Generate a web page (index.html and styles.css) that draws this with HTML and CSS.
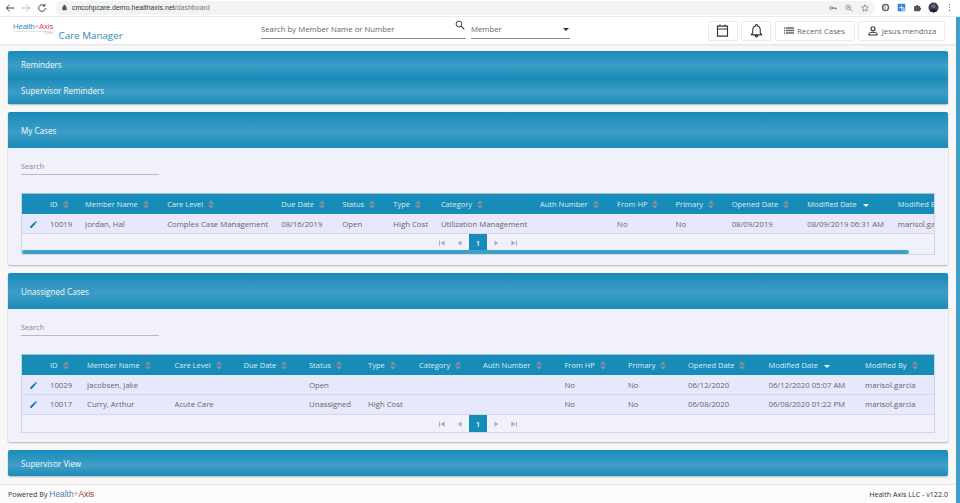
FILE: index.html
```html
<!DOCTYPE html>
<html lang="en">
<head>
<meta charset="utf-8">
<title>Care Manager</title>
<link rel="stylesheet" href="styles.css">
</head>
<body>
<svg class="defs" width="0" height="0" aria-hidden="true">
  <symbol id="sort" viewBox="0 0 7 10"><path d="M3.500 0 7 4H0zM0 6h7l-3.500 4z"/></symbol>
  <symbol id="edit" viewBox="0 0 24 24"><path d="M3 17.200V21h3.800L17.800 9.900l-3.700-3.700zM20.700 7a1 1 0 0 0 0-1.400l-2.300-2.300a1 1 0 0 0-1.400 0l-1.800 1.800 3.700 3.700z"/></symbol>
  <symbol id="first" viewBox="0 0 8 8"><path d="M0 .5h1.300v7H0zM7.500.5v7L2 4z"/></symbol>
  <symbol id="prev" viewBox="0 0 8 8"><path d="M6 .5v7L1 4z"/></symbol>
  <symbol id="next" viewBox="0 0 8 8"><path d="M2 .5v7L7 4z"/></symbol>
  <symbol id="last" viewBox="0 0 8 8"><path d="M6.700.5H8v7H6.700zM.5.5v7L6 4z"/></symbol>
</svg>

<div class="chrome">
  <svg class="c-ico" viewBox="0 0 12 12"><path d="M11 6H2M5.500 2 1.500 6l4 4" fill="none" stroke="#444" stroke-width="1.200"/></svg>
  <svg class="c-ico" viewBox="0 0 12 12"><path d="M1 6h9M6.500 2l4 4-4 4" fill="none" stroke="#b5b5b5" stroke-width="1.200"/></svg>
  <svg class="c-ico" viewBox="0 0 12 12"><path d="M10 6a4 4 0 1 1-1.200-2.800M9.500 1v2.700H6.800" fill="none" stroke="#444" stroke-width="1.200"/></svg>
  <div class="omnibox">
    <svg class="lock" viewBox="0 0 8 10"><path d="M1 4h6v5H1zM2.300 4V2.700a1.700 1.700 0 0 1 3.400 0V4" fill="#555" stroke="#555" stroke-width=".7"/></svg>
    <span class="url"><span class="url-host">cmcohpcare.demo.healthaxis.net</span>/dashboard</span>
    <span class="omni-right">
      <svg class="o-ico" viewBox="0 0 12 12"><circle cx="3.500" cy="6" r="2" fill="none" stroke="#666" stroke-width="1.300"/><path d="M5.500 6H11v2M9 6v1.500" fill="none" stroke="#666" stroke-width="1.300"/></svg>
      <svg class="o-ico" viewBox="0 0 12 12"><circle cx="5" cy="5" r="3.500" fill="none" stroke="#777"/><path d="m7.500 7.500 3.500 3.500M3.500 5h3M5 3.500v3" fill="none" stroke="#777"/></svg>
      <svg class="o-ico" viewBox="0 0 12 12"><path d="m6 1 1.500 3.300 3.500.4-2.600 2.400.7 3.500L6 8.900l-3.100 1.700.7-3.500L1 4.700l3.500-.4z" fill="none" stroke="#666"/></svg>
    </span>
  </div>
  <div class="exts">
    <svg class="e-ico" viewBox="0 0 12 12"><circle cx="6" cy="6" r="4" fill="#fff" stroke="#666" stroke-width="2"/><circle cx="5" cy="6" r="2" fill="#bbb"/></svg>
    <svg class="e-ico" viewBox="0 0 12 12"><rect x="1" y="1" width="10" height="10" fill="#2d88dc"/><path d="M3 6h6M6 3v6" stroke="#fff"/><rect x="7" y="7" width="4" height="4" fill="#9cc7ee"/></svg>
    <svg class="e-ico" viewBox="0 0 12 12"><path d="M1.500 4H4a1.500 1.500 0 1 1 3 0h2.500v2.200a1.500 1.500 0 1 1 0 3V11h-8z" fill="#555"/></svg>
    <svg class="e-ico avatar" viewBox="0 0 12 12"><circle cx="6" cy="6" r="5.500" fill="#34425e"/><circle cx="6" cy="4.500" r="2.200" fill="#8a5c4b"/><path d="M2 10c1-3 7-3 8 0l-4 1.500z" fill="#1e2333"/></svg>
    <svg class="e-ico" viewBox="0 0 12 12"><path d="M6 2.200v.1M6 6v.1M6 9.800v.1" stroke="#555" stroke-width="1.400" stroke-linecap="round"/></svg>
  </div>
</div>

<div class="viewport">
  <div class="page">
    <header class="topbar">
      <div class="brand">
        <div class="logo">
          <span class="logo-name"><span class="logo-health">Health</span><span class="logo-plus">+</span><span class="logo-axis">Axis</span></span>
          <span class="logo-rule"></span>
          <span class="logo-demo">Demo</span>
        </div>
        <span class="app-name">Care Manager</span>
      </div>
      <div class="search-wrap">
        <div class="field field-search">
          <span>Search by Member Name or Number</span>
          <svg class="search-ico" viewBox="0 0 12 12"><circle cx="4.800" cy="4.800" r="3.500" fill="none" stroke="#444" stroke-width="1.200"/><path d="m7.400 7.400 3.800 3.800" stroke="#444" stroke-width="1.500"/></svg>
        </div>
        <div class="field field-select">
          <span>Member</span>
          <span class="caret"></span>
        </div>
      </div>
      <div class="actions">
        <button class="btn btn-icon"><svg class="btn-svg" viewBox="0 0 24 24"><path d="M4 5h16v16H4zM4 9.500h16M8 2.500V6M16 2.500V6" fill="none" stroke="#333" stroke-width="1.800"/></svg></button>
        <button class="btn btn-icon"><svg class="btn-svg" viewBox="0 0 24 24"><path d="M12 2.500a1.500 1.500 0 0 1 1.500 1.500v.7c2.800.7 4.500 3 4.500 6V16l2 2v1H4v-1l2-2v-5.300c0-3 1.700-5.300 4.500-6V4A1.500 1.500 0 0 1 12 2.500zM10 20.500h4a2 2 0 0 1-4 0z" fill="none" stroke="#333" stroke-width="1.700"/></svg></button>
        <button class="btn btn-recent"><svg class="list-svg" viewBox="0 0 12 8"><path d="M0 0h1.200v1.800H0zM2.200 0H12v1.800H2.200zM0 3.100h1.200v1.800H0zM2.200 3.100H12v1.800H2.200zM0 6.200h1.200V8H0zM2.200 6.200H12V8H2.200z" fill="#666"/></svg>Recent Cases</button>
        <button class="btn btn-user"><svg class="user-svg" viewBox="0 0 24 24"><circle cx="12" cy="7.500" r="4" fill="none" stroke="#333" stroke-width="2.200"/><path d="M4 20v-1.500c0-2.500 5-4 8-4s8 1.500 8 4V20z" fill="none" stroke="#333" stroke-width="2.200"/></svg>jesus.mendoza</button>
      </div>
    </header>

    <main class="content">
      <section class="panel panel-stack">
        <div class="bar bar-short">Reminders</div>
        <div class="bar bar-short">Supervisor Reminders</div>
      </section>

      <section class="panel">
        <div class="bar bar-tall">My Cases</div>
        <div class="panel-body body-one">
          <div class="search-line">Search</div>
          <div class="grid-box">
            <table class="grid grid-one">
              <colgroup><col><col><col><col><col><col><col><col><col><col><col><col><col><col></colgroup>
              <thead>
                <tr>
                  <th></th>
                  <th>ID<svg class="sort"><use href="#sort"/></svg></th>
                  <th>Member Name<svg class="sort"><use href="#sort"/></svg></th>
                  <th>Care Level<svg class="sort"><use href="#sort"/></svg></th>
                  <th>Due Date<svg class="sort"><use href="#sort"/></svg></th>
                  <th>Status<svg class="sort"><use href="#sort"/></svg></th>
                  <th>Type<svg class="sort"><use href="#sort"/></svg></th>
                  <th>Category<svg class="sort"><use href="#sort"/></svg></th>
                  <th>Auth Number<svg class="sort"><use href="#sort"/></svg></th>
                  <th>From HP<svg class="sort"><use href="#sort"/></svg></th>
                  <th>Primary<svg class="sort"><use href="#sort"/></svg></th>
                  <th>Opened Date<svg class="sort"><use href="#sort"/></svg></th>
                  <th>Modified Date<span class="sort-down"></span></th>
                  <th>Modified By<svg class="sort"><use href="#sort"/></svg></th>
                </tr>
              </thead>
              <tbody>
                <tr>
                  <td class="edit-cell"><svg class="edit"><use href="#edit"/></svg></td>
                  <td>10019</td><td>Jordan, Hal</td><td>Complex Case Management</td><td>08/16/2019</td><td>Open</td><td>High Cost</td><td>Utilization Management</td><td></td><td>No</td><td>No</td><td>08/09/2019</td><td>08/09/2019 06:31 AM</td><td>marisol.garcia</td>
                </tr>
              </tbody>
            </table>
            <div class="pager">
              <svg class="pg"><use href="#first"/></svg><svg class="pg"><use href="#prev"/></svg><span class="pg-num">1</span><svg class="pg"><use href="#next"/></svg><svg class="pg"><use href="#last"/></svg>
            </div>
            <div class="hscroll"></div>
          </div>
        </div>
      </section>

      <section class="panel">
        <div class="bar bar-tall">Unassigned Cases</div>
        <div class="panel-body body-two">
          <div class="search-line">Search</div>
          <div class="grid-box">
            <table class="grid grid-two">
              <colgroup><col><col><col><col><col><col><col><col><col><col><col><col><col><col></colgroup>
              <thead>
                <tr>
                  <th></th>
                  <th>ID<svg class="sort"><use href="#sort"/></svg></th>
                  <th>Member Name<svg class="sort"><use href="#sort"/></svg></th>
                  <th>Care Level<svg class="sort"><use href="#sort"/></svg></th>
                  <th>Due Date<svg class="sort"><use href="#sort"/></svg></th>
                  <th>Status<svg class="sort"><use href="#sort"/></svg></th>
                  <th>Type<svg class="sort"><use href="#sort"/></svg></th>
                  <th>Category<svg class="sort"><use href="#sort"/></svg></th>
                  <th>Auth Number<svg class="sort"><use href="#sort"/></svg></th>
                  <th>From HP<svg class="sort"><use href="#sort"/></svg></th>
                  <th>Primary<svg class="sort"><use href="#sort"/></svg></th>
                  <th>Opened Date<svg class="sort"><use href="#sort"/></svg></th>
                  <th>Modified Date<span class="sort-down"></span></th>
                  <th>Modified By<svg class="sort"><use href="#sort"/></svg></th>
                </tr>
              </thead>
              <tbody>
                <tr>
                  <td class="edit-cell"><svg class="edit"><use href="#edit"/></svg></td>
                  <td>10029</td><td>Jacobsen, Jake</td><td></td><td></td><td>Open</td><td></td><td></td><td></td><td>No</td><td>No</td><td>06/12/2020</td><td>06/12/2020 05:07 AM</td><td>marisol.garcia</td>
                </tr>
                <tr>
                  <td class="edit-cell"><svg class="edit"><use href="#edit"/></svg></td>
                  <td>10017</td><td>Curry, Arthur</td><td>Acute Care</td><td></td><td>Unassigned</td><td>High Cost</td><td></td><td></td><td>No</td><td>No</td><td>06/08/2020</td><td>06/08/2020 01:22 PM</td><td>marisol.garcia</td>
                </tr>
              </tbody>
            </table>
            <div class="pager">
              <svg class="pg"><use href="#first"/></svg><svg class="pg"><use href="#prev"/></svg><span class="pg-num">1</span><svg class="pg"><use href="#next"/></svg><svg class="pg"><use href="#last"/></svg>
            </div>
          </div>
        </div>
      </section>

      <section class="panel">
        <div class="bar bar-bottom">Supervisor View</div>
      </section>
    </main>

    <footer class="footer">
      <span>Powered By <span class="foot-logo"><span class="foot-health">Health</span><span class="foot-plus">+</span><span class="foot-axis">Axis</span></span></span>
      <span>Health Axis LLC - v122.0</span>
    </footer>
  </div>
  <div class="scrollbar"></div>
</div>
</body>
</html>
```

FILE: styles.css
```css
* { box-sizing: border-box; }
html, body { margin: 0; height: 503px; overflow: hidden; }
body { font-family: "Open Sans", "Liberation Sans", sans-serif; font-size: 7.750px; color: #555; background: #f8f8f8; }
.defs { position: absolute; }

.chrome { height: 17px; display: flex; align-items: center; background: #fff; padding: 0 0 1px 5px; border-bottom: 1px solid #ececec; }
.c-ico { width: 10px; height: 10px; flex: none; margin-right: 6px; }
.omnibox { width: 820px; height: 14px; margin-left: 2px; background: #f1f3f4; border-radius: 7px; display: flex; align-items: center; padding: 0 6px 0 7px; gap: 5px; flex: none; }
.lock { width: 5px; height: 7px; flex: none; }
.url { font-size: 7px; color: #777; white-space: nowrap; font-family: "Liberation Sans", sans-serif; }
.url-host { color: #333; }
.omni-right { margin-left: auto; display: flex; gap: 8px; align-items: center; }
.o-ico { width: 8px; height: 8px; }
.exts { display: flex; align-items: center; gap: 7px; margin-left: 6px; }
.e-ico { width: 9px; height: 9px; flex: none; }
.avatar { width: 11px; height: 11px; margin: 0 -1px; }

.viewport { display: flex; height: 486px; }
.page { flex: 1; min-width: 0; display: flex; flex-direction: column; }
.scrollbar { width: 4px; flex: none; background: #3f9fc8; }

.topbar { height: 27px; flex: none; background: #fff; box-shadow: 0 1px 2px rgba(0,0,0,.1); display: flex; align-items: center; position: relative; }
.brand { width: 261px; flex: none; padding-left: 13px; display: flex; align-items: flex-end; gap: 5.500px; height: 100%; }
.logo { width: 40px; margin-bottom: 9px; display: flex; flex-direction: column; }
.logo-name { font-size: 7.700px; line-height: 8px; white-space: nowrap; font-family: "Liberation Sans", sans-serif; letter-spacing: -.1px; }
.logo-health { color: #2a8fc2; }
.logo-plus { color: #e88; }
.logo-axis { color: #e2474d; }
.logo-rule { height: 1px; background: #e4e4e4; }
.logo-demo { font-size: 3px; line-height: 3px; text-align: right; color: #999; }
.app-name { font-size: 9.800px; line-height: 13px; color: #2b8ab8; margin-bottom: 2.500px; font-weight: 500; white-space: nowrap; }
.search-wrap { display: flex; gap: 5px; }
.field { height: 20px; border-bottom: 1px solid #888; display: flex; align-items: center; color: #666; padding-top: 2px; position: relative; margin-bottom: 4px; }
.field-search { width: 205px; }
.field-select { width: 99px; }
.search-ico { width: 10px; height: 10px; position: absolute; right: 1px; top: 1px; }
.caret { position: absolute; right: 1px; top: 9px; border: 3px solid transparent; border-top-color: #333; border-bottom: 0; }
.actions { margin-left: auto; display: flex; gap: 3.500px; padding-right: 11px; }
.btn { height: 20px; background: #fff; border: 1px solid #ebebeb; border-radius: 2px; display: inline-flex; align-items: center; justify-content: center; font: 7.800px "Open Sans", sans-serif; color: #666; padding: 0; }
.btn-icon { width: 30px; }
.btn-recent { width: 80px; gap: 3px; }
.btn-user { width: 87px; gap: 3px; }
.btn-svg { width: 15px; height: 15px; }
.list-svg { width: 10px; height: 7px; }
.user-svg { width: 12px; height: 12px; }

.content { flex: 1; padding: 7px 8px 0; display: flex; flex-direction: column; gap: 8px; }
.panel { border-radius: 2px; background: #f1f1fb; box-shadow: 0 1px 2px rgba(0,0,0,.28); }
.panel-stack { height: 53px; }
.bar { background: linear-gradient(#1a8bb8 0%, #3d9dc6 55%, #1b8cb9 100%); color: #f3f8fb; font-size: 8.100px; font-weight: 500; display: flex; align-items: center; padding-left: 13px; }
.panel-stack .bar:first-child { border-radius: 2px 2px 0 0; }
.bar-short { height: 26.500px; }
.bar-tall { height: 36px; border-radius: 2px 2px 0 0; }
.bar-bottom { height: 26px; border-radius: 2px; background: linear-gradient(#1a8bb8 0%, #3f9fc8 60%, #1a8bb8 100%); }

.panel-body { padding: 9px 13px 0; }
.body-one { height: 117px; }
.body-two { height: 133px; }
.search-line { width: 138px; height: 18px; border-bottom: 1px solid #bbb; color: #888; font-size: 7.300px; display: flex; align-items: center; }
.grid-box { width: 914px; margin-top: 18px; overflow: hidden; border: 1px solid #cfd6df; border-top-color: #9cc3d6; background: #f1f1fb; position: relative; }
.body-one .grid-box { height: 62px; }
.body-two .grid-box { height: 79px; }

.grid { border-collapse: collapse; table-layout: fixed; width: 100%; }
.grid-one { width: 942px; }
.grid th { height: 20px; padding: 0; background: #178cb9; color: #d9edf5; font-weight: 500; font-size: 7.500px; text-align: left; white-space: nowrap; }
.grid td { height: 19.500px; padding: 0; background: #e8e8fd; border-bottom: 1px solid #d4d6e2; color: #666; white-space: nowrap; overflow: hidden; }
.grid .edit-cell { text-align: left; padding-left: 6.500px; }
.edit { width: 9px; height: 9px; fill: #1a7db0; display: inline-block; vertical-align: middle; }
.sort { width: 6px; height: 9px; margin-left: 5px; fill: #8a9099; vertical-align: -1.500px; }
.sort-down { display: inline-block; margin-left: 6px; vertical-align: 0; border: 3px solid transparent; border-top-color: #f3f8fb; border-bottom: 0; }

.grid-one col:nth-child(1) { width: 28px; }
.grid-one col:nth-child(2) { width: 35px; }
.grid-one col:nth-child(3) { width: 82px; }
.grid-one col:nth-child(4) { width: 114px; }
.grid-one col:nth-child(5) { width: 61px; }
.grid-one col:nth-child(6) { width: 51px; }
.grid-one col:nth-child(7) { width: 47.500px; }
.grid-one col:nth-child(8) { width: 99px; }
.grid-one col:nth-child(9) { width: 77px; }
.grid-one col:nth-child(10) { width: 58.500px; }
.grid-one col:nth-child(11) { width: 56px; }
.grid-one col:nth-child(12) { width: 75.500px; }
.grid-one col:nth-child(13) { width: 90.500px; }
.grid-one col:nth-child(14) { width: 66px; }

.grid-two col:nth-child(1) { width: 28px; }
.grid-two col:nth-child(2) { width: 37px; }
.grid-two col:nth-child(3) { width: 87.500px; }
.grid-two col:nth-child(4) { width: 69px; }
.grid-two col:nth-child(5) { width: 65.500px; }
.grid-two col:nth-child(6) { width: 59px; }
.grid-two col:nth-child(7) { width: 51px; }
.grid-two col:nth-child(8) { width: 64px; }
.grid-two col:nth-child(9) { width: 81.500px; }
.grid-two col:nth-child(10) { width: 63.500px; }
.grid-two col:nth-child(11) { width: 60px; }
.grid-two col:nth-child(12) { width: 80.500px; }
.grid-two col:nth-child(13) { width: 96.500px; }
.grid-two col:nth-child(14) { width: 69.500px; }

.pager { height: 18px; display: flex; align-items: center; justify-content: center; }
.pg { width: 6px; height: 6px; fill: #a9adb5; margin: 0 6px; }
.pg-num { width: 18px; height: 18px; background: #178cb9; color: #e6f2f7; font-weight: 600; display: flex; align-items: center; justify-content: center; }
.hscroll { position: absolute; left: 0; bottom: 0; width: 887px; height: 4px; background: #3f9fc8; border-radius: 2px; }

.footer { height: 19px; flex: none; background: #fcfcfc; border-top: 1px solid #e8e8e8; display: flex; align-items: center; justify-content: space-between; padding: 0 8px; color: #333; font-size: 7.150px; }
.foot-logo { font-family: "Liberation Sans", sans-serif; font-size: 8.400px; }
.foot-health { color: #4c7fb5; }
.foot-plus { color: #c88; }
.foot-axis { color: #a33; }
```
